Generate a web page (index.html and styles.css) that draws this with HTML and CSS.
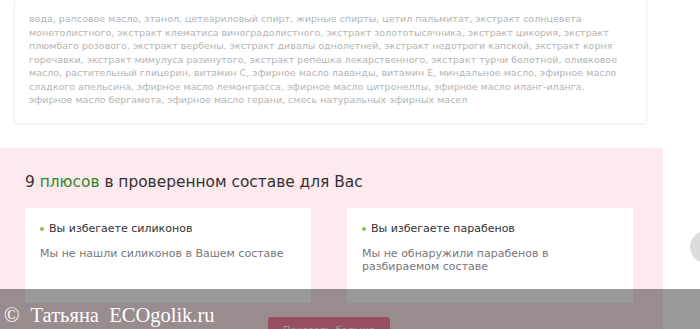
FILE: index.html
```html
<!DOCTYPE html>
<html lang="ru">
<head>
    <meta charset="UTF-8">
    <meta name="viewport" content="width=device-width, initial-scale=1.0">
    <title>Состав</title>
    <link rel="stylesheet" href="styles.css">
</head>
<body>
    <div class="ingredients">
        вода, рапсовое масло, этанол, цетеариловый спирт, жирные спирты, цетил пальмитат, экстракт солнцевета<br>
        монетолистного, экстракт клематиса виноградолистного, экстракт золототысячника, экстракт цикория, экстракт<br>
        плюмбаго розового, экстракт вербены, экстракт дивалы однолетней, экстракт недотроги капской, экстракт корня<br>
        горечавки, экстракт мимулуса разинутого, экстракт репешка лекарственного, экстракт турчи болотной, оливковое<br>
        масло, растительный глицерин, витамин С, эфирное масло лаванды, витамин Е, миндальное масло, эфирное масло<br>
        сладкого апельсина, эфирное масло лемонграсса, эфирное масло цитронеллы, эфирное масло иланг-иланга,<br>
        эфирное масло бергамота, эфирное масло герани, смесь натуральных эфирных масел
    </div>

    <div class="pluses">
        <h2 class="pluses-title">9 <span class="green">плюсов</span> в проверенном составе для Вас</h2>
        <div class="cards">
            <div class="card">
                <div class="card-title">Вы избегаете силиконов</div>
                <div class="card-text">Мы не нашли силиконов в Вашем составе</div>
            </div>
            <div class="card">
                <div class="card-title">Вы избегаете парабенов</div>
                <div class="card-text">Мы не обнаружили парабенов в<br>разбираемом составе</div>
            </div>
        </div>
        <div class="more">
            <button class="more-btn">Показать больше</button>
        </div>
    </div>

    <div class="slider-arrow"></div>

    <div class="watermark"><span class="copy">©</span>Татьяна&nbsp; ECOgolik.ru</div>
</body>
</html>
```

FILE: styles.css
```css
body {
    margin: 0;
    width: 700px;
    height: 329px;
    overflow: hidden;
    position: relative;
    background: #fff;
    font-family: "DejaVu Sans", sans-serif;
}
.ingredients {
    width: 603px;
    margin-left: 14px;
    padding: 12px 14px 16px;
    border: 1px solid #f1f1f1;
    border-top: none;
    box-shadow: 0 1px 3px rgba(0,0,0,0.04);
    font-size: 9.5px;
    line-height: 13.5px;
    color: #b5b5b5;
    white-space: nowrap;
}
.pluses {
    width: 663px;
    margin-top: 24px;
    padding: 24px 0 0;
    background: #fde9ee;
    height: 200px;
}
.pluses-title {
    margin: 0 0 16px 25px;
    font-size: 15.4px;
    line-height: 20px;
    font-weight: normal;
    color: #333;
}
.green {
    color: #2f8a2a;
}
.cards {
    display: grid;
    grid-template-columns: 286px 286px;
    gap: 36px;
    margin-left: 25px;
}
.card {
    background: #fff;
    height: 95px;
    box-sizing: border-box;
    padding: 14px 15px;
}
.card-title {
    font-size: 11px;
    line-height: 14px;
    color: #333;
    padding-left: 9px;
    position: relative;
}
.card-title::before {
    content: "";
    position: absolute;
    left: 0;
    top: 5px;
    width: 4px;
    height: 4px;
    border-radius: 50%;
    background: #8cc63f;
}
.card-text {
    margin-top: 11px;
    font-size: 11px;
    line-height: 13.5px;
    color: #777;
}
.more {
    text-align: center;
    margin-top: 14px;
    padding-right: 5px;
}
.more-btn {
    width: 122px;
    height: 28px;
    border: none;
    border-radius: 3px;
    background: #ff84a5;
    color: #fff;
    font-family: "DejaVu Sans", sans-serif;
    font-size: 10px;
}
.slider-arrow {
    position: absolute;
    left: 690px;
    top: 231px;
    width: 32px;
    height: 32px;
    border-radius: 50%;
    background: #dcdcdc;
}
.watermark {
    position: absolute;
    left: 0;
    bottom: 0;
    width: 100%;
    height: 40px;
    box-sizing: border-box;
    padding: 14px 0 0 4px;
    background: rgba(0,0,0,0.4);
    color: #fff;
    font-family: "Liberation Serif", serif;
    font-size: 20.5px;
    line-height: 24px;
}
.copy {
    margin-right: 11px;
}
```
